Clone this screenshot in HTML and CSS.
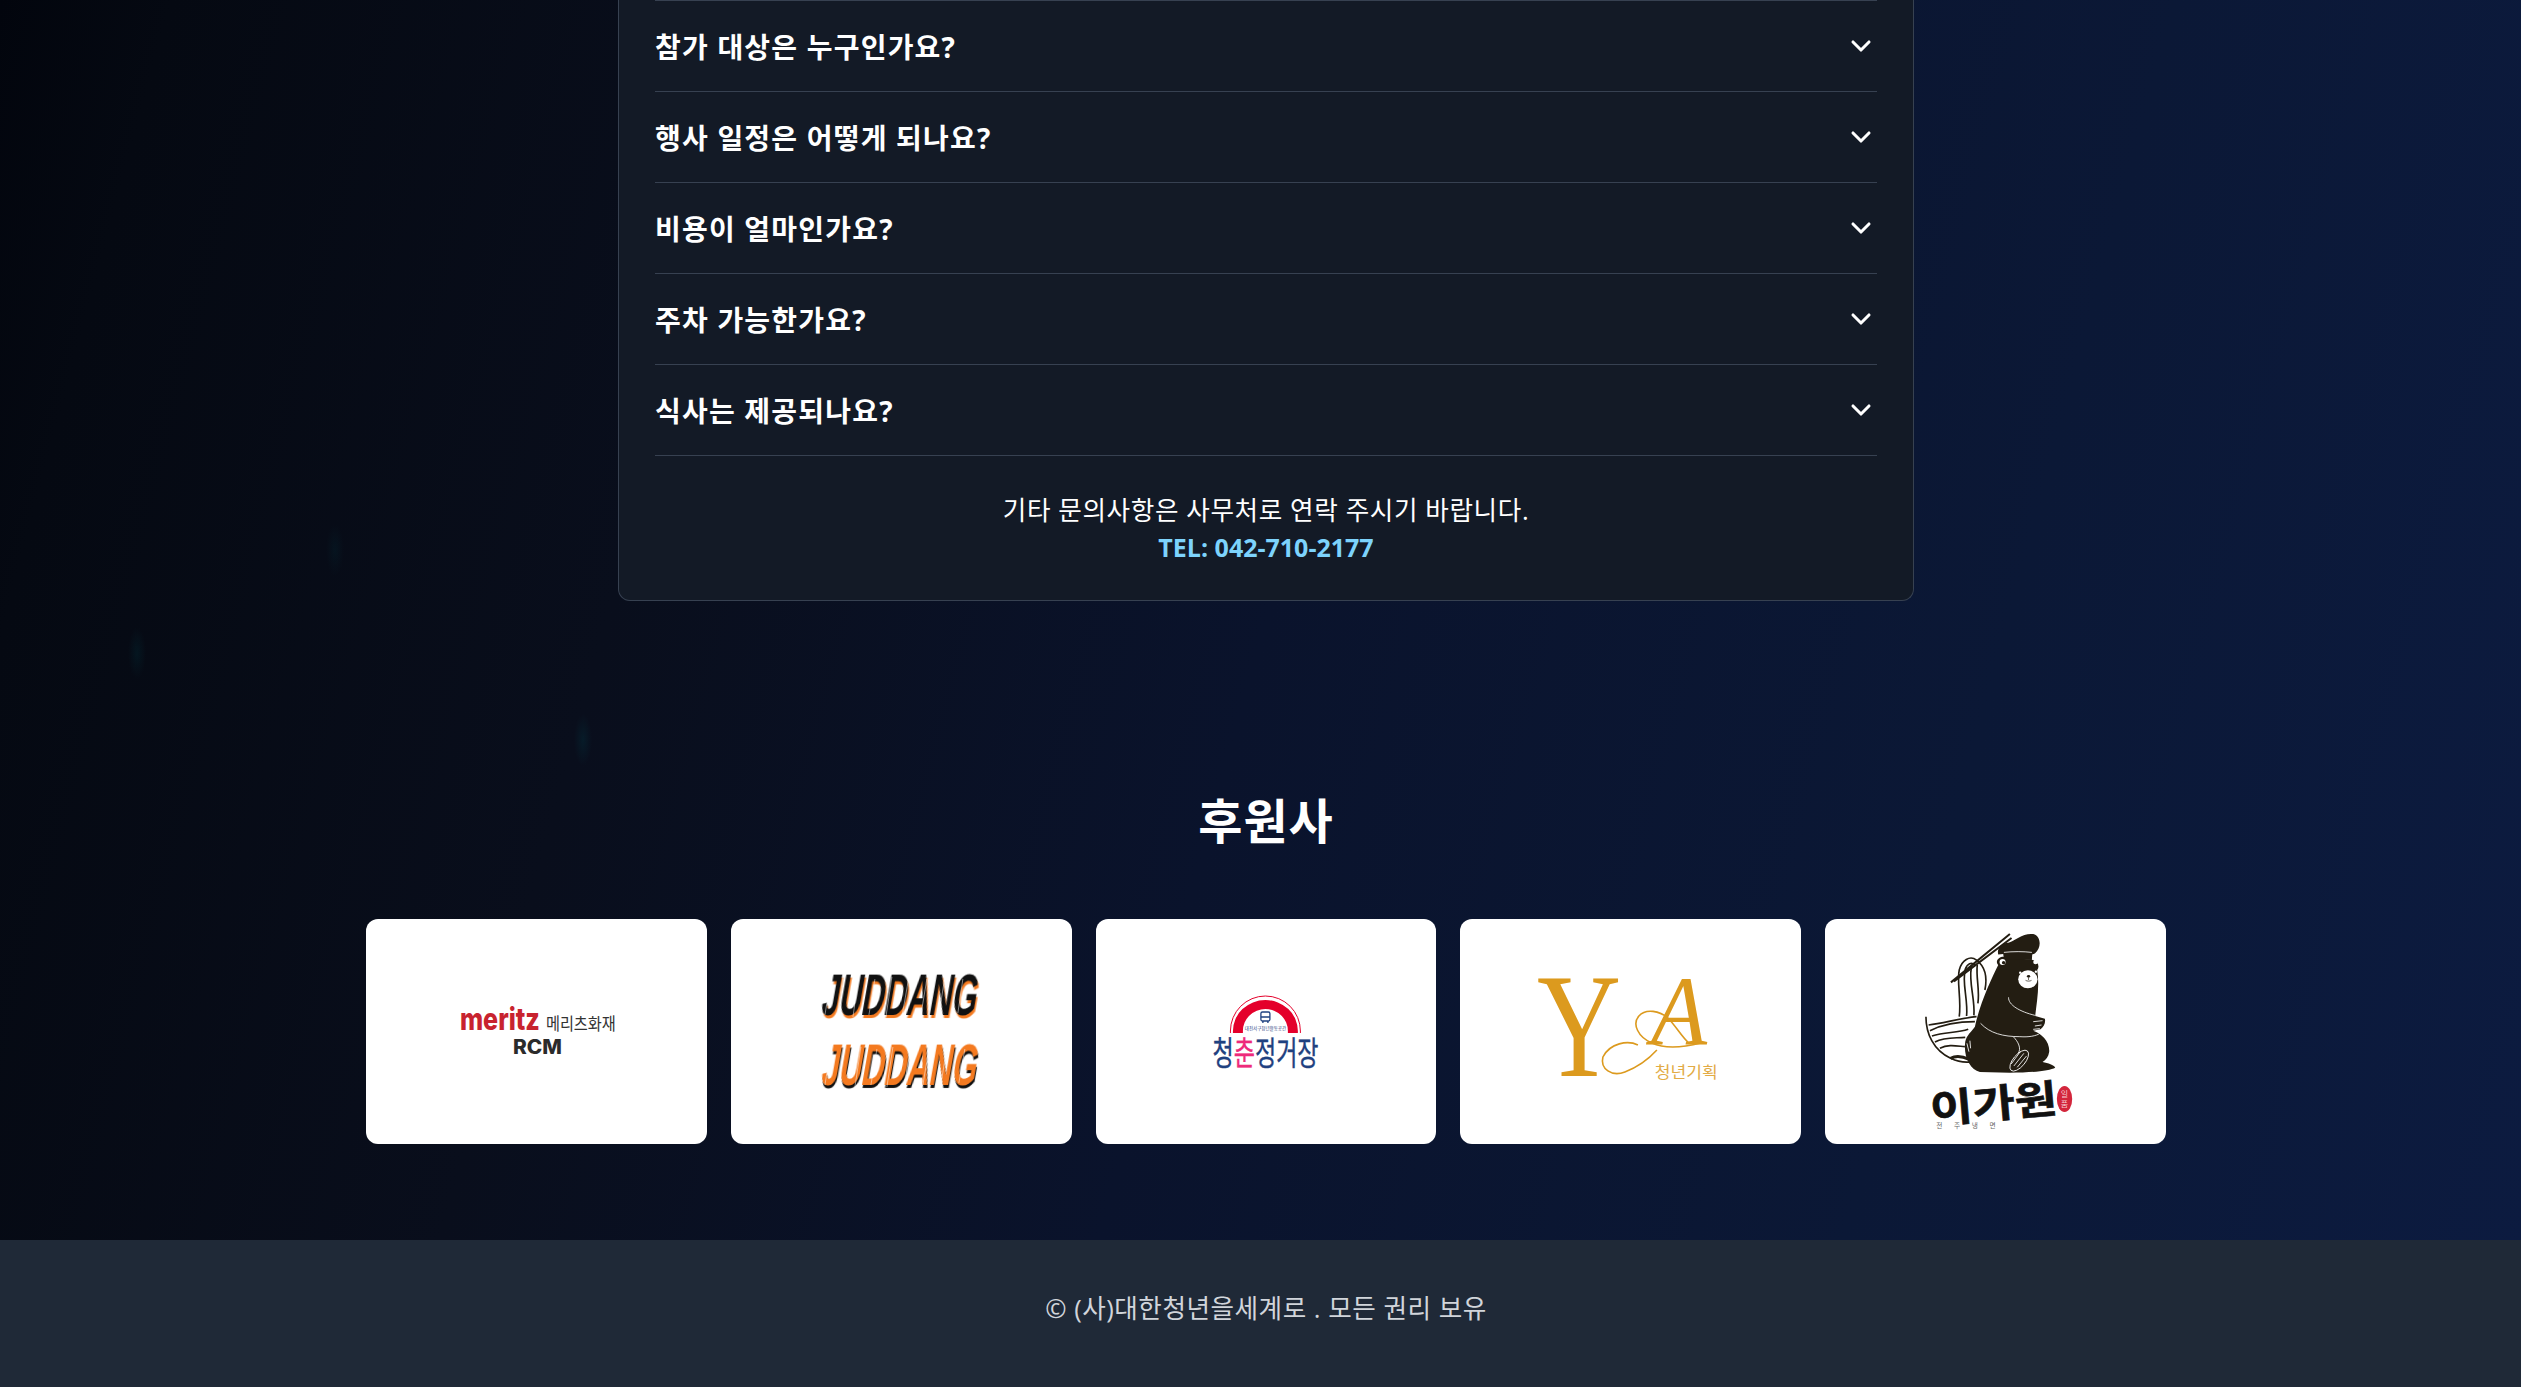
FILE: index.html
```html
<!DOCTYPE html>
<html lang="ko">
<head>
  <meta charset="UTF-8">
  <meta name="viewport" content="width=device-width, initial-scale=1.0">
  <title>후원사 | 대한청년을세계로</title>
  <link rel="stylesheet" href="styles.css">
</head>
<body>
  <main class="page">
    <section class="faq-card">
      <div class="faq-list">
        <div class="faq-item">
          <span>참가 대상은 누구인가요?</span>
          <svg class="chevron" viewBox="0 0 24 24"><polyline points="6 9 12 15 18 9"/></svg>
        </div>
        <div class="faq-item">
          <span>행사 일정은 어떻게 되나요?</span>
          <svg class="chevron" viewBox="0 0 24 24"><polyline points="6 9 12 15 18 9"/></svg>
        </div>
        <div class="faq-item">
          <span>비용이 얼마인가요?</span>
          <svg class="chevron" viewBox="0 0 24 24"><polyline points="6 9 12 15 18 9"/></svg>
        </div>
        <div class="faq-item">
          <span>주차 가능한가요?</span>
          <svg class="chevron" viewBox="0 0 24 24"><polyline points="6 9 12 15 18 9"/></svg>
        </div>
        <div class="faq-item">
          <span>식사는 제공되나요?</span>
          <svg class="chevron" viewBox="0 0 24 24"><polyline points="6 9 12 15 18 9"/></svg>
        </div>
      </div>
      <div class="contact">
        <p>기타 문의사항은 사무처로 연락 주시기 바랍니다.</p>
        <p class="tel">TEL: 042-710-2177</p>
      </div>
    </section>

    <section class="sponsors">
      <h2>후원사</h2>
      <div class="sponsor-grid">
        <div class="sponsor">
          <svg viewBox="0 0 341 225">
            <text x="94" y="111" class="logo-bold" font-size="30" fill="#c8232f" textLength="80" lengthAdjust="spacingAndGlyphs">meritz</text>
            <text x="180" y="111" class="logo-kr" font-size="17" fill="#333" textLength="70" lengthAdjust="spacingAndGlyphs">메리츠화재</text>
            <text x="147" y="135.500" class="logo-bold" font-size="20" fill="#2b2b2b" textLength="49" lengthAdjust="spacingAndGlyphs">RCM</text>
          </svg>
        </div>
        <div class="sponsor">
          <svg viewBox="0 0 341 225">
            <text transform="translate(89 96) skewX(-10) scale(.54 1)" class="brush brush-dark" font-size="58">JUDDANG</text>
            <path d="M100 58L94 96M112 58L106 96M128 56L122 98M144 60L138 96M161 58L155 98M178 58L171 98M196 60L190 96M214 58L208 96M232 60L227 94" class="bristle"/>
            <text transform="translate(89 166) skewX(-10) scale(.54 1)" class="brush brush-orange" font-size="58">JUDDANG</text>
            <path d="M100 128L94 166M114 128L108 166M130 128L124 168M146 130L140 166M162 128L156 168M180 128L173 168M198 130L192 166M216 128L210 166M234 130L228 164" class="bristle"/>
          </svg>
        </div>
        <div class="sponsor">
          <svg viewBox="0 0 341 225">
            <path d="M134.500 114V112a35 35 0 0 1 70 0V114" fill="none" stroke="#e4002b" stroke-width="1"/>
            <path d="M137 114V112a32.500 31 0 0 1 65 0V114H192V112a22.500 22 0 0 0 -45 0V114Z" fill="#e4002b"/>
            <g fill="none" stroke="#1f4180" stroke-width="1.300">
              <rect x="165" y="93" width="9" height="9" rx="1.500"/>
              <path d="M165 98H174M167 102V104M172 102V104"/>
            </g>
            <text x="169.500" y="111" class="logo-kr" font-size="4.500" fill="#1f4180" text-anchor="middle">대전서구청년활동공간</text>
            <text transform="translate(116.500 146) scale(.7 1)" class="logo-kr" font-size="33" fill="#1f4180" stroke="#1f4180" stroke-width=".4">청<tspan fill="#ee2a7b" stroke="#ee2a7b">춘</tspan>정거장</text>
          </svg>
        </div>
        <div class="sponsor">
          <svg viewBox="0 0 341 225">
            <text x="77" y="157" class="logo-serif" font-size="148" fill="#dc9a1e" textLength="84" lengthAdjust="spacingAndGlyphs">Y</text>
            <text x="191" y="126" class="logo-serif logo-italic" font-size="100" fill="#dc9a1e" textLength="56" lengthAdjust="spacingAndGlyphs">A</text>
            <path d="M178 126C168 121 150 124 143 138C140 150 152 158 165 153C178 148 187 142 197 131" fill="none" stroke="#dc9a1e" stroke-width="1.600"/>
            <path d="M241 124C225 128 205 130 192 124C178 118 172 105 179 97C186 89 200 92 208 99C216 107 222 118 229 124" fill="none" stroke="#dc9a1e" stroke-width="1.600"/>
            <text x="195" y="159" class="logo-kr" font-size="15.500" fill="#e2ab45" textLength="63" lengthAdjust="spacingAndGlyphs">청년기획</text>
          </svg>
        </div>
        <div class="sponsor">
          <svg viewBox="15 27 1023 675">
            <!-- chopsticks -->
            <path d="M393 217L570 72M402 214L575 84" fill="none" stroke="#231d12" stroke-width="6"/>
            <!-- noodles -->
            <g fill="none" stroke="#231d12" stroke-width="5">
              <path d="M418 320C425 270 410 215 418 180C425 150 450 135 470 150C490 165 505 190 495 240"/>
              <path d="M440 318C445 270 425 215 436 178C442 160 455 155 465 165"/>
              <path d="M462 316C466 270 446 215 454 175"/>
              <path d="M474 280C480 240 468 205 472 165"/>
            </g>
            <!-- bowl -->
            <g fill="none" stroke="#231d12" stroke-width="5">
              <path d="M318 320C318 370 340 420 392 445C415 456 435 458 452 456"/>
              <path d="M326 345C370 340 420 325 470 320"/>
              <path d="M330 362C375 340 420 335 465 335"/>
              <path d="M336 378C375 365 410 370 445 358"/>
              <path d="M345 396C375 380 405 385 436 382"/>
              <path d="M360 415C385 402 410 408 435 410"/>
              <path d="M392 445C410 435 430 440 448 448" stroke-width="9"/>
            </g>
            <!-- bear -->
            <path class="bear" d="M535 165C525 155 535 140 550 140L640 150C655 155 660 170 652 180C660 230 650 280 646 318L675 326C678 338 672 350 662 358L640 362C665 370 690 395 688 425C686 440 678 450 668 456C685 460 702 464 706 473C690 482 640 488 570 488L480 486C450 478 430 440 436 395C440 375 455 365 465 350C480 280 515 205 535 165Z"/>
            <path class="bear" d="M535 133C530 115 545 100 565 98C585 92 610 68 640 72C665 78 665 115 645 130L637 133L636 150L552 147L550 132Z"/>
            <path d="M552 127C580 124 610 124 636 127" fill="none" stroke="#fff" stroke-width="2.500"/>
            <circle cx="548" cy="156" r="14" fill="#231d12"/>
            <circle cx="548" cy="156" r="9" fill="#fff"/>
            <circle cx="551" cy="158" r="5" fill="#231d12"/>
            <circle cx="647" cy="156" r="7" fill="#fff"/>
            <ellipse cx="624" cy="208" rx="29" ry="27" fill="#fff"/>
            <ellipse cx="626" cy="199" rx="5" ry="4" fill="#231d12"/>
            <path d="M626 203V210M617 211C622 214 630 214 635 211" fill="none" stroke="#231d12" stroke-width="2"/>
            <circle cx="601" cy="188" r="3.500" fill="#fff"/>
            <circle cx="648" cy="185" r="3.500" fill="#fff"/>
            <g fill="none" stroke="#fff" stroke-width="2.500">
              <path d="M566 262C565 285 600 305 645 316"/>
              <path d="M482 340C510 370 550 380 600 380C625 382 650 378 660 370"/>
              <path d="M580 380C595 395 605 415 595 430"/>
              <path d="M640 335L668 332M645 348L665 345M640 358L660 356"/>
              <ellipse cx="598" cy="452" rx="18" ry="38" transform="rotate(40 598 452)"/>
              <path d="M582 468L612 430M592 472L620 438M574 462L602 424"/>
              <path d="M441 400L447 425M450 392L452 415"/>
            </g>
            <!-- name -->
            <text transform="rotate(-5 520 580)" x="330" y="624" class="logo-kr" font-size="118" font-weight="700" fill="#111" stroke="#111" stroke-width="2" textLength="382" lengthAdjust="spacingAndGlyphs">이가원</text>
            <text x="349" y="654" class="logo-kr" font-size="20" fill="#666" textLength="178">전 주 냉 면</text>
            <ellipse cx="734" cy="567" rx="23" ry="39" fill="#d3263c"/>
            <text x="734" y="562" class="logo-kr" font-size="24" fill="#f6c9cf" text-anchor="middle">일</text>
            <text x="734" y="590" class="logo-kr" font-size="24" fill="#f6c9cf" text-anchor="middle">품</text>
          </svg>
        </div>
      </div>
    </section>
  </main>

  <footer class="site-footer">© (사)대한청년을세계로 . 모든 권리 보유</footer>
</body>
</html>
```

FILE: styles.css
```css
html {
  overflow: hidden;
}
body {
  margin: 0;
  width: 2532px;
  font-family: "Open Sans", "Noto Sans CJK KR", sans-serif;
  color: #fff;
  background-color: #070c18;
}
.page {
  background:
    radial-gradient(ellipse 9px 26px at 137px 653px, rgba(0, 70, 80, 0.2), transparent),
    radial-gradient(ellipse 9px 26px at 583px 740px, rgba(0, 70, 80, 0.24), transparent),
    radial-gradient(ellipse 9px 26px at 335px 550px, rgba(0, 70, 80, 0.14), transparent),
    linear-gradient(105deg, #02050d 0, #050912 6%, #090e1c 27%, #0a132c 50%, #0b1836 76%, #0c1b40 100%);
  height: 1240px;
  overflow: hidden;
}
.faq-card {
  box-sizing: border-box;
  width: 1296px;
  height: 601px;
  margin: 0 auto;
  padding: 0 36px;
  background: #131a26;
  border: 1px solid #374151;
  border-top: 0;
  border-radius: 0 0 12px 12px;
}
.faq-list {
  border-top: 1px solid #374151;
}
.faq-item {
  display: flex;
  align-items: center;
  justify-content: space-between;
  box-sizing: border-box;
  height: 91px;
  border-bottom: 1px solid #374151;
  font-size: 28px;
  font-weight: 700;
  letter-spacing: 1.2px;
}
.chevron {
  width: 32px;
  height: 32px;
  fill: none;
  stroke: #fff;
  stroke-width: 2.300;
  stroke-linecap: round;
  stroke-linejoin: round;
}
.contact {
  padding-top: 36px;
  text-align: center;
  font-size: 25.600px;
  letter-spacing: 0.6px;
  line-height: 37px;
}
.contact p {
  margin: 0;
}
.contact .tel {
  font-size: 25px;
  line-height: 36px;
  letter-spacing: 0;
  font-weight: 700;
  color: #7dd3fc;
}
.sponsors {
  width: 1800px;
  margin: 0 auto;
  padding-top: 190px;
}
.sponsors h2 {
  margin: 0 0 68px;
  text-align: center;
  font-size: 48px;
  letter-spacing: 1px;
  line-height: 60px;
  font-weight: 700;
}
.sponsor-grid {
  display: grid;
  grid-template-columns: repeat(5, 1fr);
  gap: 24px;
}
.sponsor {
  height: 225px;
  background: #fff;
  border-radius: 12px;
  overflow: hidden;
}
.sponsor svg {
  display: block;
  width: 100%;
  height: 100%;
}
.logo-bold {
  font-family: "Inter", "Liberation Sans", sans-serif;
  font-weight: 800;
}
.logo-kr {
  font-family: "Noto Sans CJK KR", sans-serif;
}
.logo-serif {
  font-family: "Liberation Serif", serif;
}
.logo-italic {
  font-style: italic;
}
.brush {
  font-family: "Liberation Sans", sans-serif;
  font-weight: 700;
}
.brush-dark {
  fill: #111;
  filter: drop-shadow(3px 3px 0 #f47a20);
}
.brush-orange {
  fill: #f47a20;
  filter: drop-shadow(2px 3px 0 #111);
}
.bristle {
  fill: none;
  stroke: #fff;
  stroke-width: 0.800;
  opacity: 0.6;
}
.bear {
  fill: #231d12;
}
.site-footer {
  height: 147px;
  box-sizing: border-box;
  padding-top: 51px;
  background: #1f2937;
  color: #d1d5db;
  text-align: center;
  font-size: 25.600px;
  letter-spacing: 0.5px;
  line-height: 36px;
}
```
